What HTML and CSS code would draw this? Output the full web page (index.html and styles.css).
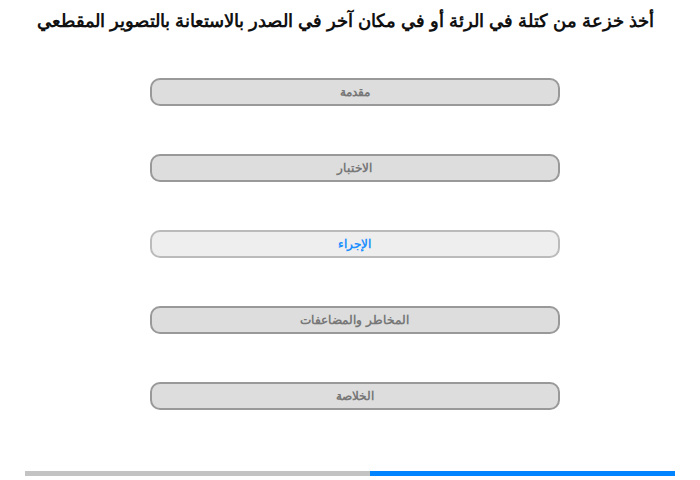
FILE: index.html
```html
<!DOCTYPE html>
<html lang="ar" dir="rtl">
    <head>
        <meta charset="UTF-8">
        <meta name="viewport" content="width=device-width, initial-scale=1.0"/>
        <title>أخذ خزعة من كتلة في الرئة</title>
        <link rel="stylesheet" href="styles.css">
    </head>
    <body>
        <h1 class="title">أخذ خزعة من كتلة في الرئة أو في مكان آخر في الصدر بالاستعانة بالتصوير المقطعي</h1>

        <div class="steps">
            <button class="step">مقدمة</button>
            <button class="step">الاختبار</button>
            <button class="step active">الإجراء</button>
            <button class="step">المخاطر والمضاعفات</button>
            <button class="step">الخلاصة</button>
        </div>

        <div class="progress">
            <span class="progress-done"></span>
            <span class="progress-left"></span>
        </div>
    </body>
</html>
```

FILE: styles.css
```css
*
{
    box-sizing: border-box;
}

body
{
    margin: 0;
    width: 700px;
    height: 480px;
    font-family: "Liberation Sans", Arial, sans-serif;
    background: #fff;
}

.title
{
    margin: 0;
    padding: 10px 8px 0 0;
    font-size: 18px;
    font-weight: bold;
    text-align: center;
    white-space: nowrap;
    color: #111;
}

.steps
{
    display: flex;
    flex-direction: column;
    align-items: center;
    gap: 48px;
    margin: 46px 0 0 9px;
}

.step
{
    width: 410px;
    height: 28px;
    padding: 0;
    border: 2px solid #999;
    border-radius: 10px;
    background: #ddd;
    color: #777;
    font-family: "Liberation Sans", Arial, sans-serif;
    font-size: 12px;
    font-weight: bold;
}

.step.active
{
    border-color: #bbb;
    background: #eee;
    color: #1e90ff;
}

.progress
{
    display: flex;
    width: 650px;
    height: 5px;
    margin: 61px 25px 0;
}

.progress-done
{
    width: 305px;
    background: #0084ff;
}

.progress-left
{
    flex: 1;
    background: #c3c3c3;
}
```
